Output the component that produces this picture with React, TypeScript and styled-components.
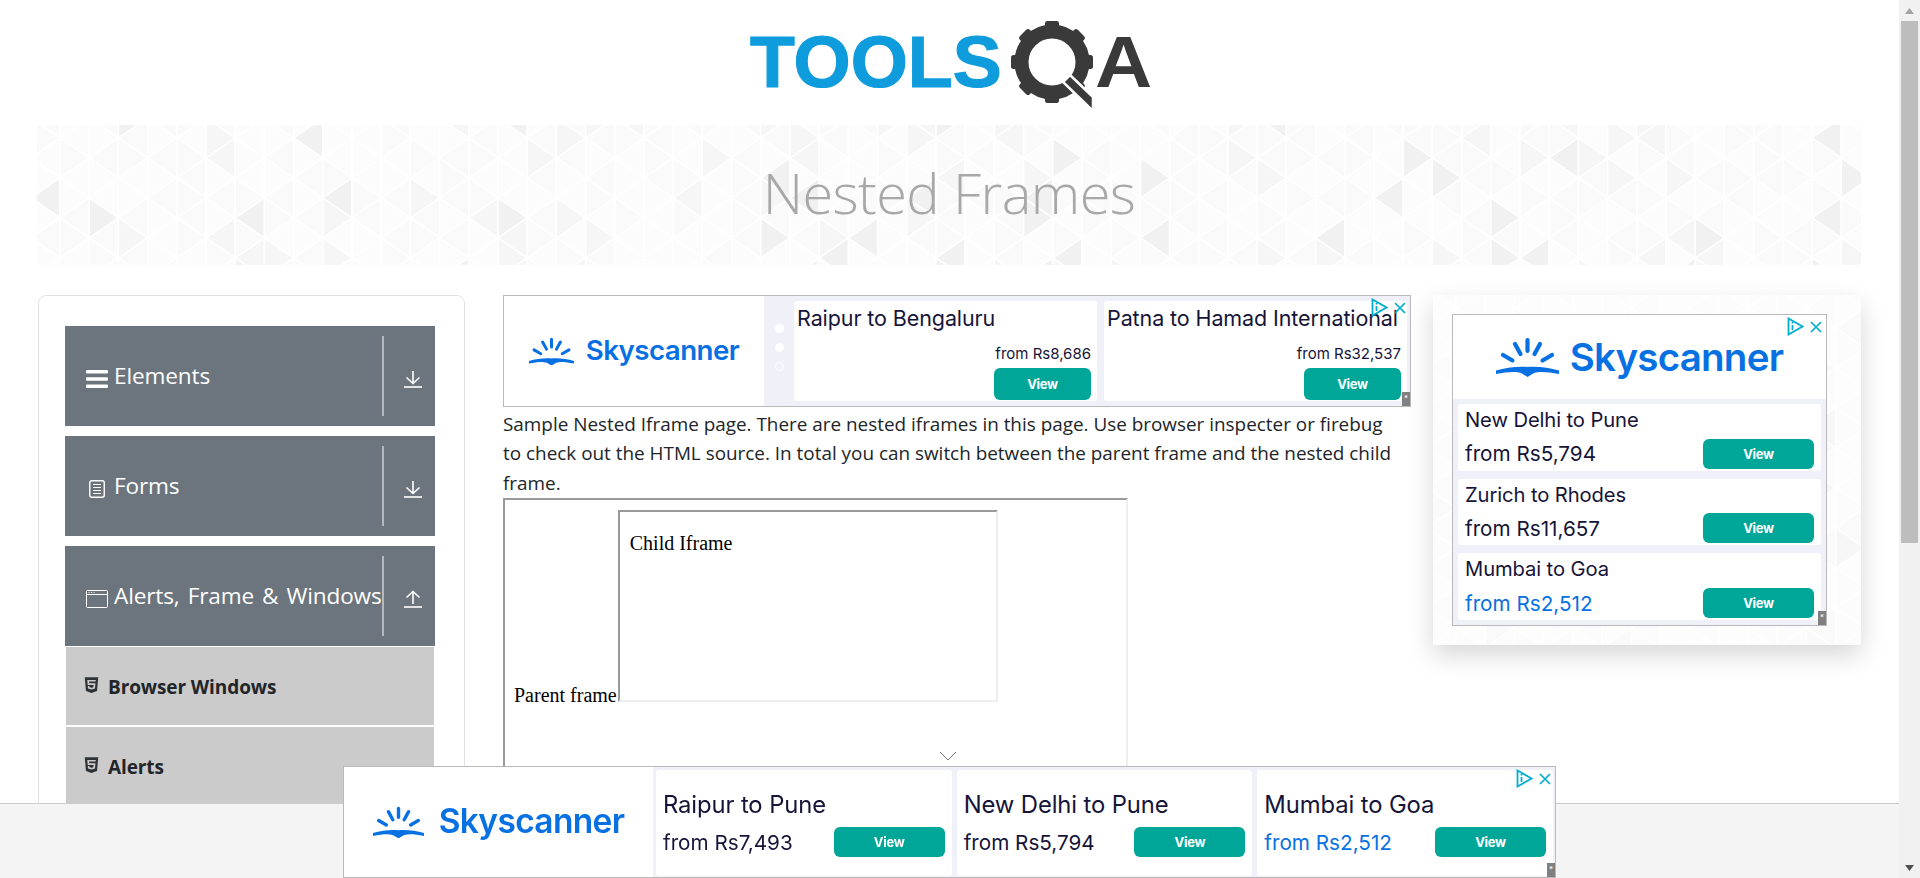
import React, { useMemo } from "react";
import styled, { createGlobalStyle } from "styled-components";
import { FaHtml5 } from "react-icons/fa";

const GlobalStyle = createGlobalStyle`
  html, body {
    margin: 0;
    padding: 0;
    height: 100%;
    overflow: hidden;
    background: #fff;
  }
`;

const bodyFont = `"Open Sans", "Noto Sans", sans-serif`;
const adFont = `Inter, "Noto Sans", sans-serif`;

const Page = styled.div`
  display: flex;
  width: 1920px;
  height: 878px;
  overflow: hidden;
  font-family: ${bodyFont};
`;

const Column = styled.div`
  width: 1899px;
  flex-shrink: 0;
`;

const Header = styled.header`
  display: flex;
  justify-content: center;
  height: 125px;
  padding: 21px 0 0 3px;
  box-sizing: border-box;
`;

const Logo = styled.div`
  display: flex;
  align-items: flex-start;
  height: 92px;
`;

const LogoWord = styled.span`
  display: block;
  width: 253px;
  margin: 0 8px 0 0;
  font-family: "Liberation Sans", sans-serif;
  font-weight: 700;
  font-size: 72px;
  line-height: 83px;
  color: #0f9cdc;
  -webkit-text-stroke: 1.2px #0f9cdc;
  transform: scaleX(1.02);
  transform-origin: left center;
  white-space: nowrap;
`;

const LogoGear = styled.svg`
  flex-shrink: 0;
`;

const LogoA = styled.span`
  display: block;
  width: 58px;
  font-family: "Liberation Sans", sans-serif;
  font-weight: 700;
  font-size: 72px;
  line-height: 83px;
  color: #3a3a3a;
  transform: scaleX(1.1);
  transform-origin: left center;
`;

const Banner = styled.div`
  position: relative;
  height: 140px;
  margin: 0 38px 0 37px;
  padding-bottom: 6px;
  box-sizing: border-box;
  display: flex;
  align-items: center;
  justify-content: center;
  overflow: hidden;
  background: #fff;
`;

const PatternSvg = styled.svg<{ $faint?: boolean }>`
  position: absolute;
  left: 0;
  top: 0;
  opacity: ${(p) => (p.$faint ? 0.5 : 1)};
`;

const Title = styled.h1`
  position: relative;
  margin: 0;
  font-size: 56px;
  font-weight: 300;
  color: #a8a8a8;
  letter-spacing: -0.6px;
`;

const Content = styled.div`
  display: flex;
  align-items: flex-start;
  padding: 30px 0 0 38px;
`;

const Sidebar = styled.aside`
  width: 427px;
  height: 620px;
  flex-shrink: 0;
  box-sizing: border-box;
  border: 1px solid #dee2e6;
  border-radius: 8px;
  padding: 30px 29px 0 26px;
  display: flex;
  flex-direction: column;
  gap: 10px;
`;

const Group = styled.div`
  display: flex;
  flex-direction: column;
`;

const GroupHeader = styled.div`
  display: flex;
  align-items: center;
  height: 100px;
  background: #6c757d;
  color: #fff;
  padding-left: 21px;
`;

const GroupIcon = styled.span`
  width: 22px;
  height: 22px;
  margin: 5px 6px 0 0;
  flex-shrink: 0;
  display: flex;
  align-items: center;
  justify-content: center;
`;

const GroupLabel = styled.span`
  flex: 1;
  margin-top: -2px;
  font-size: 22.6px;
  white-space: nowrap;
  letter-spacing: -0.15px;
  word-spacing: 2.4px;
`;

const GroupDivider = styled.span`
  width: 2px;
  height: 80px;
  background: #b5b9bd;
`;

const GroupArrow = styled.span`
  width: 51px;
  display: flex;
  justify-content: center;
  padding-left: 6px;
  box-sizing: border-box;
  margin-top: 6px;
`;

const SubList = styled.ul`
  list-style: none;
  margin: 1px 1px 0;
  padding: 0;
  display: flex;
  flex-direction: column;
  gap: 2px;
`;

const SubItem = styled.li`
  display: flex;
  align-items: center;
  gap: 8px;
  height: 78px;
  box-sizing: border-box;
  padding: 2px 0 0 17px;
  background: #cbcbcb;
  color: #212529;
  font-size: 19px;
  font-weight: 700;
  letter-spacing: -0.1px;
`;

const Html5 = styled(FaHtml5)`
  width: 17px;
  height: 18px;
  color: #2f3338;
  margin-top: -5px;
`;

const Main = styled.main`
  width: 908px;
  flex-shrink: 0;
  margin-left: 38px;
`;

const Lead = styled.p`
  margin: 3px 0 0;
  width: 896px;
  font-size: 18.9px;
  line-height: 29.4px;
  color: #212529;
`;

const ParentFrame = styled.div`
  width: 625px;
  height: 340px;
  box-sizing: border-box;
  padding: 10px 10px 10px 9px;
  border: 2px solid;
  border-color: #9a9a9a #eeeeee #eeeeee #9a9a9a;
  font-family: "Liberation Serif", "Times New Roman", serif;
  font-size: 20px;
  color: #000;
  background: #fff;
`;

const ChildFrame = styled.div`
  display: inline-block;
  overflow: hidden;
  width: 380px;
  height: 192px;
  margin-left: 1px;
  box-sizing: border-box;
  padding: 20px 10px;
  border: 2px solid;
  border-color: #9a9a9a #eeeeee #eeeeee #9a9a9a;
`;

const SideBlock = styled.div`
  position: relative;
  width: 428px;
  height: 350px;
  flex-shrink: 0;
  margin-left: 22px;
  box-sizing: border-box;
  padding: 19px;
  background: #fff;
  box-shadow: 0 10px 24px rgba(0, 0, 0, 0.16);
  overflow: hidden;
`;

type Layout = "top" | "side" | "bottom";

const AdFrame = styled.div<{ $layout: Layout }>`
  position: relative;
  box-sizing: border-box;
  border: 1px solid #b9b9b9;
  background: #f0f1f8;
  font-family: ${adFont};
  color: #161438;
  display: flex;
  flex-direction: ${(p) => (p.$layout === "side" ? "column" : "row")};
  width: ${(p) => (p.$layout === "side" ? "375px" : p.$layout === "top" ? "908px" : "1213px")};
  height: ${(p) => (p.$layout === "side" ? "312px" : "112px")};
`;

const LogoPanel = styled.div<{ $layout: Layout }>`
  background: #fff;
  display: flex;
  align-items: center;
  justify-content: center;
  flex-shrink: 0;
  width: ${(p) => (p.$layout === "side" ? "100%" : p.$layout === "top" ? "260px" : "309px")};
  height: ${(p) => (p.$layout === "side" ? "84px" : "100%")};
`;

const SkyLogo = styled.div<{ $size: number; $gap: number }>`
  display: flex;
  align-items: center;
  gap: ${(p) => p.$gap}px;
  color: #0770e3;
  font-family: ${adFont};
  font-weight: 600;
  letter-spacing: -0.02em;
  font-size: ${(p) => p.$size}px;
  line-height: 1;
`;

const DotStrip = styled.div`
  width: 30px;
  flex-shrink: 0;
  display: flex;
  flex-direction: column;
  align-items: center;
  justify-content: center;
  gap: 10px;
  padding-bottom: 8px;
  box-sizing: border-box;
`;

const Dot = styled.span<{ $hollow?: boolean }>`
  width: 9px;
  height: 9px;
  border-radius: 50%;
  box-sizing: border-box;
  background: ${(p) => (p.$hollow ? "transparent" : "#fff")};
  border: 1px solid #fff;
`;

const Cards = styled.div<{ $layout: Layout }>`
  flex: 1;
  min-width: 0;
  display: flex;
  flex-direction: ${(p) => (p.$layout === "side" ? "column" : "row")};
  gap: ${(p) => (p.$layout === "bottom" ? "5px" : p.$layout === "top" ? "7px" : "8px")};
  padding: ${(p) =>
    p.$layout === "side" ? "5px" : p.$layout === "top" ? "5px 3px 5px 0" : "3px 2px 1px 3px"};
`;

const Card = styled.div<{ $layout: Layout }>`
  flex: 1;
  min-width: 0;
  display: flex;
  flex-direction: column;
  background: #fff;
  border-radius: 3px;
  overflow: hidden;
  padding: ${(p) =>
    p.$layout === "side" ? "4px 7px 2px" : p.$layout === "top" ? "5px 6px 1px 3px" : "23px 7px 19px"};
`;

const Route = styled.div<{ $layout: Layout }>`
  white-space: nowrap;
  line-height: 24px;
  font-size: ${(p) => (p.$layout === "side" ? "20.2px" : p.$layout === "top" ? "21.5px" : "23.8px")};
  letter-spacing: -0.1px;
`;

const Offer = styled.div<{ $layout: Layout }>`
  margin-top: auto;
  display: flex;
  flex-direction: ${(p) => (p.$layout === "top" ? "column" : "row")};
  align-items: ${(p) => (p.$layout === "top" ? "flex-end" : "center")};
  justify-content: space-between;
  gap: ${(p) => (p.$layout === "top" ? "5px" : "0")};
`;

const Price = styled.div<{ $layout: Layout; $deal?: boolean }>`
  white-space: nowrap;
  font-size: ${(p) => (p.$layout === "top" ? "15px" : "20.7px")};
  color: ${(p) => (p.$deal ? "#0770e3" : "#161438")};
`;

const ViewButton = styled.div<{ $layout: Layout }>`
  display: flex;
  align-items: center;
  justify-content: center;
  background: #00a698;
  color: #fff;
  font-size: 13px;
  font-weight: 700;
  letter-spacing: -0.3px;
  border-radius: 6px;
  width: ${(p) => (p.$layout === "top" ? "97px" : "111px")};
  height: ${(p) => (p.$layout === "top" ? "32px" : "30px")};
`;

const AdChoices = styled.div`
  position: absolute;
  top: 2px;
  right: 4px;
  display: flex;
  align-items: center;
  gap: 6px;
`;

const AdMark = styled.span`
  position: absolute;
  right: 0;
  bottom: 0;
  width: 8px;
  height: 14px;
  background: #808080;
  color: #fff;
  font-size: 8px;
  line-height: 12px;
  text-align: center;
`;

const Footer = styled.div`
  position: fixed;
  left: 0;
  top: 803px;
  width: 1899px;
  height: 75px;
  box-sizing: border-box;
  background: #f4f4f4;
  border-top: 1px solid #cccccc;
`;

const FooterAd = styled.div`
  position: fixed;
  left: 343px;
  top: 766px;
`;

const Chevron = styled.svg`
  position: absolute;
  left: 596px;
  top: -15px;
`;

const ScrollTrack = styled.div`
  width: 21px;
  height: 878px;
  flex-shrink: 0;
  background: #f1f1f1;
  display: flex;
  flex-direction: column;
  align-items: center;
`;

const ScrollStep = styled.div`
  height: 21px;
  display: flex;
  align-items: center;
  justify-content: center;
  flex-shrink: 0;
`;

const ScrollThumb = styled.div`
  width: 17px;
  height: 522px;
  background: #bdbdbd;
`;

const ScrollSpace = styled.div`
  flex: 1;
`;

function Pattern({ width, height, faint }: { width: number; height: number; faint?: boolean }) {
  const tris = useMemo(() => {
    const out: { points: string; fill: string }[] = [];
    const stepX = 29.2;
    const stepY = 40;
    let seed = 7;
    const rnd = () => {
      seed = (seed * 16807) % 2147483647;
      return seed / 2147483647;
    };
    const pick = () => {
      const r = rnd();
      if (r < 0.06) return "#f1f1f1";
      if (r < 0.18) return "#f6f6f6";
      if (r < 0.6) return "#fafafa";
      return "#fcfcfc";
    };
    for (let i = -1; i * stepX < width; i++) {
      const x0 = 23 + (i - 1) * stepX;
      const x1 = x0 + stepX;
      const odd = Math.abs(i) % 2 === 1;
      const yl = odd ? 20 : 0;
      const yr = odd ? 0 : 20;
      for (let k = -1; k * stepY < height + stepY; k++) {
        const l0 = yl + k * stepY - 7;
        const r0 = yr + k * stepY - 7;
        if (odd) {
          out.push({ points: `${x0},${l0} ${x1},${r0} ${x1},${r0 + stepY}`, fill: pick() });
          out.push({ points: `${x0},${l0} ${x0},${l0 + stepY} ${x1},${r0 + stepY}`, fill: pick() });
        } else {
          out.push({ points: `${x0},${l0} ${x0},${l0 + stepY} ${x1},${r0}`, fill: pick() });
          out.push({ points: `${x0},${l0 + stepY} ${x1},${r0} ${x1},${r0 + stepY}`, fill: pick() });
        }
      }
    }
    return out;
  }, [width, height]);

  return (
    <PatternSvg $faint={faint} width={width} height={height} viewBox={`0 0 ${width} ${height}`}>
      {tris.map((t, i) => (
        <polygon key={i} points={t.points} fill={t.fill} stroke="#fff" strokeWidth={1.5} />
      ))}
    </PatternSvg>
  );
}

function ToolsQaLogo() {
  const teeth = [0, 45, 90, 135, 180, 225, 270, 315];
  return (
    <Logo>
      <LogoWord>TOOLS</LogoWord>
      <LogoGear width="84" height="92" viewBox="0 0 84 92">
        <g transform="translate(41 41)">
          <circle r="30.5" fill="none" stroke="#3a3a3a" strokeWidth="14" />
          {teeth.map((a) => (
            <rect key={a} x="-7" y="-41" width="14" height="10" rx="2.5" fill="#3a3a3a" transform={`rotate(${a})`} />
          ))}
        </g>
        <polygon points="59,54 82,76 82,90 52,61" fill="#3a3a3a" stroke="#fff" strokeWidth="2.5" />
      </LogoGear>
      <LogoA>A</LogoA>
    </Logo>
  );
}

function SkyMark({ width }: { width: number }) {
  return (
    <svg width={width} height={(width * 40) / 63} viewBox="0 0 63 40" fill="#0770e3">
      <g stroke="#0770e3" strokeWidth="4.2" strokeLinecap="round">
        <line x1="31.5" y1="3" x2="31.5" y2="14" />
        <line x1="19" y1="7" x2="24.5" y2="17" />
        <line x1="44" y1="7" x2="38.5" y2="17" />
        <line x1="7" y1="18" x2="16.5" y2="23.5" />
        <line x1="56" y1="18" x2="46.5" y2="23.5" />
      </g>
      <path d="M0 33.5C10 30.5 22 29 31.5 30C41 29 53 30.5 63 33.5L63 37C52 35 44 34 38 36L31.5 40L25 36C19 34 11 35 0 37Z" />
    </svg>
  );
}

function AdChoiceIcons() {
  return (
    <AdChoices>
      <svg width="17" height="19" viewBox="0 0 17 19" fill="none" stroke="#00aecd" strokeWidth="1.8">
        <path d="M1.5 1.5V17.5L15.5 9.5Z" />
        <path d="M5.5 8V13M5.5 5V6.5" />
      </svg>
      <svg width="12" height="12" viewBox="0 0 12 12" stroke="#00aecd" strokeWidth="1.7">
        <path d="M1 1L11 11M11 1L1 11" />
      </svg>
    </AdChoices>
  );
}

type Deal = { route: string; price: string; deal?: boolean };

function SkyscannerAd({
  layout,
  deals,
  logoSize,
  markWidth,
  logoGap,
}: {
  layout: Layout;
  deals: Deal[];
  logoSize: number;
  markWidth: number;
  logoGap: number;
}) {
  return (
    <AdFrame $layout={layout}>
      <LogoPanel $layout={layout}>
        <SkyLogo $size={logoSize} $gap={logoGap}>
          <SkyMark width={markWidth} />
          <span>Skyscanner</span>
        </SkyLogo>
      </LogoPanel>
      {layout === "top" && (
        <DotStrip>
          <Dot />
          <Dot />
          <Dot $hollow />
        </DotStrip>
      )}
      <Cards $layout={layout}>
        {deals.map((d) => (
          <Card key={d.route} $layout={layout}>
            <Route $layout={layout}>{d.route}</Route>
            <Offer $layout={layout}>
              <Price $layout={layout} $deal={d.deal}>
                {d.price}
              </Price>
              <ViewButton $layout={layout}>View</ViewButton>
            </Offer>
          </Card>
        ))}
      </Cards>
      <AdChoiceIcons />
      <AdMark>*</AdMark>
    </AdFrame>
  );
}

const Arrow = ({ up }: { up?: boolean }) => (
  <svg width="18" height="18" viewBox="0 0 18 18" fill="none" stroke="#fff" strokeWidth="1.6">
    {up ? <path d="M9 14V1.5M2.5 7.5L9 1.5L15.5 7.5" /> : <path d="M9 1V13.5M2.5 7.5L9 13.5L15.5 7.5" />}
    <path d="M0 17H18" />
  </svg>
);

const BarsIcon = () => (
  <svg width="22" height="20" viewBox="0 0 22 20" fill="#fff">
    <rect y="1" width="22" height="3.4" rx="1" />
    <rect y="8.3" width="22" height="3.4" rx="1" />
    <rect y="15.6" width="22" height="3.4" rx="1" />
  </svg>
);

const FormIcon = () => (
  <svg width="16" height="18" viewBox="0 0 16 18" fill="none" stroke="#fff">
    <rect x="0.75" y="0.75" width="14.5" height="16.5" rx="2" strokeWidth="1.4" />
    <path d="M4 4.5H12M4 7.5H12M4 10.5H12M4 13.5H12" strokeWidth="1" />
  </svg>
);

const WindowIcon = () => (
  <svg width="22" height="18" viewBox="0 0 22 18" fill="none" stroke="#fff" strokeWidth="1">
    <rect x="0.5" y="0.5" width="21" height="17" rx="1" />
    <path d="M0.5 4.5H21.5" />
    <path d="M2.5 2.5H3.5M5 2.5H6M7.5 2.5H8.5" />
  </svg>
);

const topDeals: Deal[] = [
  { route: "Raipur to Bengaluru", price: "from Rs8,686" },
  { route: "Patna to Hamad International", price: "from Rs32,537" },
];

const sideDeals: Deal[] = [
  { route: "New Delhi to Pune", price: "from Rs5,794" },
  { route: "Zurich to Rhodes", price: "from Rs11,657" },
  { route: "Mumbai to Goa", price: "from Rs2,512", deal: true },
];

const bottomDeals: Deal[] = [
  { route: "Raipur to Pune", price: "from Rs7,493" },
  { route: "New Delhi to Pune", price: "from Rs5,794" },
  { route: "Mumbai to Goa", price: "from Rs2,512", deal: true },
];

export default function App() {
  return (
    <Page>
      <GlobalStyle />
      <Column>
        <Header>
          <ToolsQaLogo />
        </Header>
        <Banner>
          <Pattern width={1824} height={140} />
          <Title>Nested Frames</Title>
        </Banner>
        <Content>
          <Sidebar>
            <GroupHeader>
              <GroupIcon>
                <BarsIcon />
              </GroupIcon>
              <GroupLabel>Elements</GroupLabel>
              <GroupDivider />
              <GroupArrow>
                <Arrow />
              </GroupArrow>
            </GroupHeader>
            <GroupHeader>
              <GroupIcon>
                <FormIcon />
              </GroupIcon>
              <GroupLabel>Forms</GroupLabel>
              <GroupDivider />
              <GroupArrow>
                <Arrow />
              </GroupArrow>
            </GroupHeader>
            <Group>
              <GroupHeader>
                <GroupIcon>
                  <WindowIcon />
                </GroupIcon>
                <GroupLabel>Alerts, Frame &amp; Windows</GroupLabel>
                <GroupDivider />
                <GroupArrow>
                  <Arrow up />
                </GroupArrow>
              </GroupHeader>
              <SubList>
                <SubItem>
                  <Html5 />
                  Browser Windows
                </SubItem>
                <SubItem>
                  <Html5 />
                  Alerts
                </SubItem>
              </SubList>
            </Group>
          </Sidebar>
          <Main>
            <SkyscannerAd layout="top" deals={topDeals} logoSize={27.7} markWidth={45} logoGap={12} />
            <Lead>
              Sample Nested Iframe page. There are nested iframes in this page. Use browser inspecter or firebug to check
              out the HTML source. In total you can switch between the parent frame and the nested child frame.
            </Lead>
            <ParentFrame>
              Parent frame
              <ChildFrame>Child Iframe</ChildFrame>
            </ParentFrame>
          </Main>
          <SideBlock>
            <Pattern width={428} height={350} faint />
            <SkyscannerAd layout="side" deals={sideDeals} logoSize={38.5} markWidth={63} logoGap={11} />
          </SideBlock>
        </Content>
      </Column>
      <ScrollTrack>
        <ScrollStep>
          <svg width="9" height="6" viewBox="0 0 9 6" fill="#a3a3a3">
            <path d="M4.5 0L9 6H0Z" />
          </svg>
        </ScrollStep>
        <ScrollThumb />
        <ScrollSpace />
        <ScrollStep>
          <svg width="9" height="6" viewBox="0 0 9 6" fill="#505050">
            <path d="M0 0H9L4.5 6Z" />
          </svg>
        </ScrollStep>
      </ScrollTrack>
      <Footer />
      <FooterAd>
        <Chevron width="18" height="10" viewBox="0 0 18 10" fill="none" stroke="#777" strokeWidth="1">
          <path d="M1 1L9 9L17 1" />
        </Chevron>
        <SkyscannerAd layout="bottom" deals={bottomDeals} logoSize={33.5} markWidth={51} logoGap={15} />
      </FooterAd>
    </Page>
  );
}
